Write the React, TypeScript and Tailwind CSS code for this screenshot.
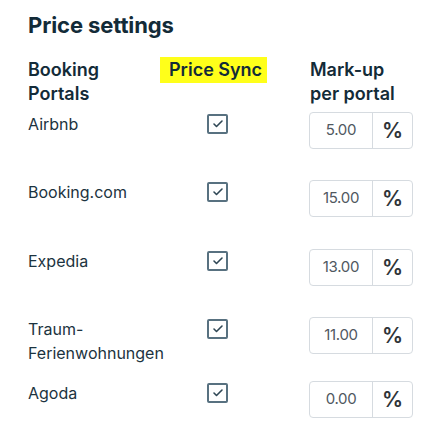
import { Check } from "lucide-react"

const portals = [
  { name: "Airbnb", markup: "5.00", row: "h-[68px]" },
  { name: "Booking.com", markup: "15.00", row: "h-[69px]" },
  { name: "Expedia", markup: "13.00", row: "h-[68px]" },
  { name: "Traum-\nFerienwohnungen", markup: "11.00", row: "h-[64px]" },
  { name: "Agoda", markup: "0.00", row: "h-[60px]" },
]

function SyncBox() {
  return (
    <div className="flex h-[20px] w-[21px] items-center justify-center rounded-[2px] border-2 border-[#587180] bg-white">
      <Check className="h-[12px] w-[12px] text-[#2f4755]" strokeWidth={3.2} />
    </div>
  )
}

function MarkupInput({ value }: { value: string }) {
  return (
    <div className="flex h-[37px] w-[104px] rounded-[4px] border border-[#d6dbe0] bg-white">
      <div className="flex w-[63px] items-center justify-center border-r border-[#d6dbe0] text-[15px] tracking-[-0.3px] text-[#50585f]">
        {value}
      </div>
      <div className="flex flex-1 items-center justify-center text-[21px] font-semibold text-[#2f3438]">
        %
      </div>
    </div>
  )
}

export default function App() {
  return (
    <div className="min-h-screen bg-white px-[28px] pt-[10px] font-['Inter',sans-serif] text-[#132b38]">
      <h2 className="text-[22px] font-bold leading-[30px] tracking-[-0.1px]">Price settings</h2>

      <div className="mt-[18px] grid grid-cols-[132px_107px_42px_104px] text-[18px] font-semibold leading-[24px]">
        <div>
          Booking
          <br />
          Portals
        </div>
        <div>
          <span className="-mt-[1px] inline-block h-[26px] whitespace-nowrap bg-[#ffff1a] pl-[9px] pr-[5px] leading-[26px]">
            Price Sync
          </span>
        </div>
        <div />
        <div className="whitespace-nowrap pl-[1px]">
          Mark-up
          <br />
          per portal
        </div>
      </div>

      <div className="mt-[6px]">
        {portals.map((p) => (
          <div key={p.name} className={`grid grid-cols-[132px_107px_42px_104px] items-start ${p.row}`}>
            <div className="whitespace-pre-line text-[16px] leading-[24px] text-[#1c3340]">{p.name}</div>
            <div className="pl-[47px] pt-[2px]">
              <SyncBox />
            </div>
            <div />
            <MarkupInput value={p.markup} />
          </div>
        ))}
      </div>
    </div>
  )
}
